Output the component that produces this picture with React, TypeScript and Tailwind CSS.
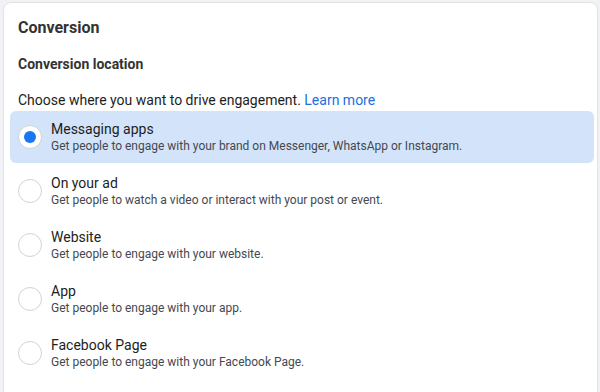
import React from "react";

const options = [
  { title: "Messaging apps", desc: "Get people to engage with your brand on Messenger, WhatsApp or Instagram.", selected: true },
  { title: "On your ad", desc: "Get people to watch a video or interact with your post or event." },
  { title: "Website", desc: "Get people to engage with your website." },
  { title: "App", desc: "Get people to engage with your app." },
  { title: "Facebook Page", desc: "Get people to engage with your Facebook Page." },
];

export default function App() {
  return (
    <div
      className="w-[600px] h-[392px] overflow-hidden bg-[#f0f2f5] pt-[2px] pl-[3px] pr-[2px]"
      style={{ fontFamily: "Roboto, 'Liberation Sans', sans-serif" }}
    >
      <div className="h-[400px] bg-white rounded-[8px] border border-[#e3e3e3] pl-[6px] pr-[3px] pt-[15px]">
        <div className="px-[8px] text-[16px] leading-[20px] font-bold text-[#333]">Conversion</div>
        <div className="px-[8px] mt-[17px] text-[14px] leading-[18px] font-bold text-[#333]">Conversion location</div>
        <div className="px-[8px] mt-[17px] text-[14px] leading-[20px] text-[#1c1e21]">
          Choose where you want to drive engagement. <span className="text-[#216fdb]">Learn more</span>
        </div>
        <div className="mt-[1px] flex flex-col gap-[2px]">
          {options.map((o) => (
            <div
              key={o.title}
              className={`flex items-center h-[52px] rounded-[6px] pl-[8px] ${o.selected ? "bg-[#d3e3fa]" : ""}`}
            >
              <div className="w-[24px] h-[24px] rounded-full bg-white border border-[#cfd3d8] flex items-center justify-center shrink-0">
                {o.selected && <div className="w-[12px] h-[12px] rounded-full bg-[#1877f2]" />}
              </div>
              <div className="ml-[9px] flex flex-col">
                <div className="text-[14px] leading-[18px] text-[#1c1e21]">{o.title}</div>
                <div className="text-[12px] leading-[16px] text-[#444950]">{o.desc}</div>
              </div>
            </div>
          ))}
        </div>
      </div>
    </div>
  );
}
